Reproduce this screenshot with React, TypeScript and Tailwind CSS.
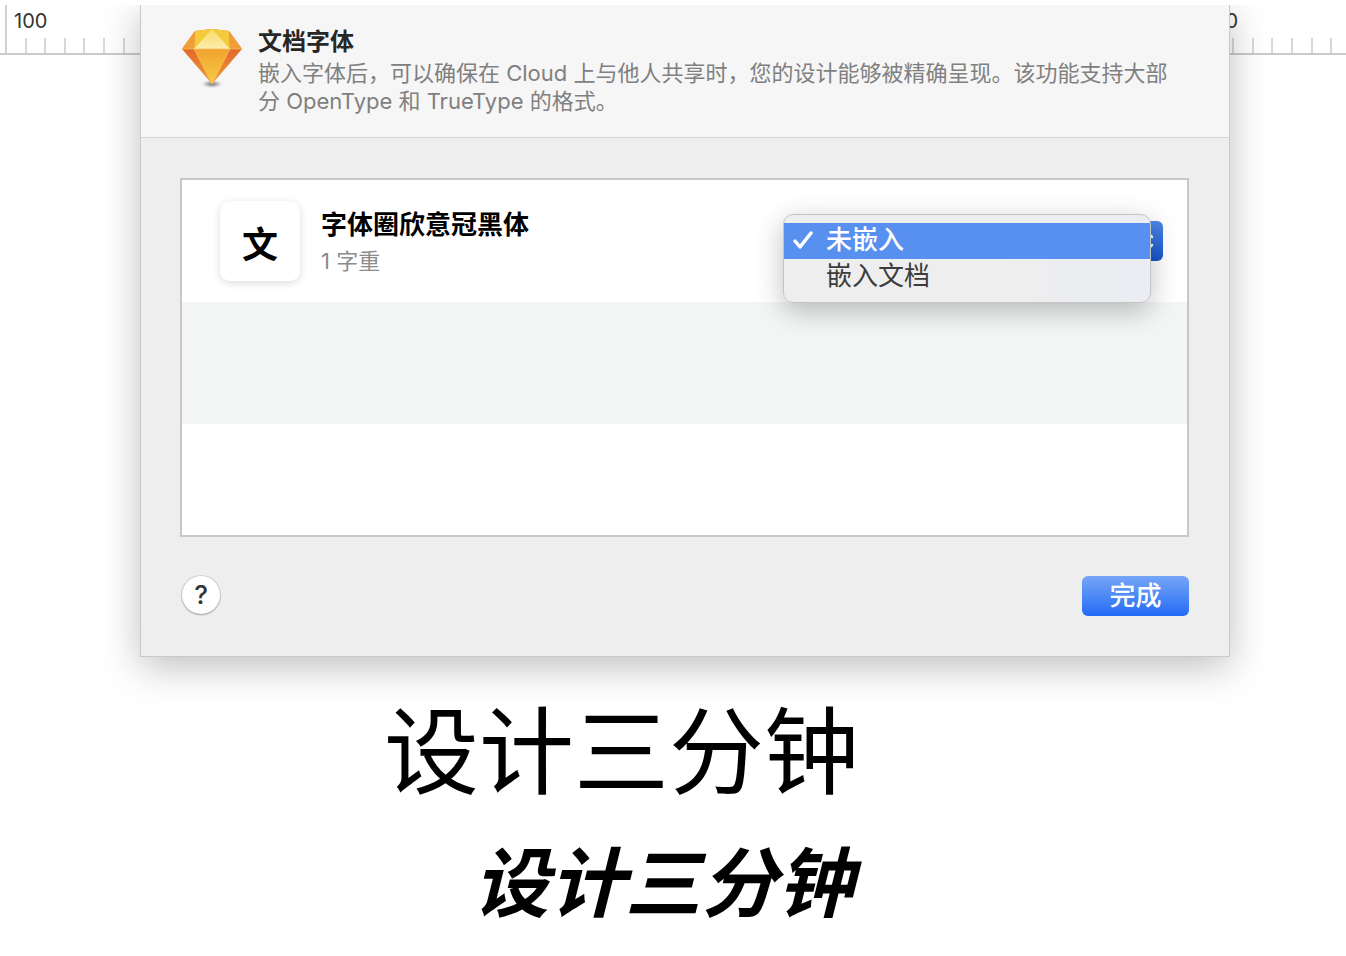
import { useState } from "react";
import { clsx } from "clsx";

const OPTIONS = ["未嵌入", "嵌入文档"];

// Labels of the marks that the sheet leaves uncovered
const RULER_MARKS = ["100", "", "", "", "", "", "700"];

function Ruler() {
  return (
    <div className="col-start-1 row-start-1 flex h-[50px] self-start overflow-hidden border-b-2 border-[#cbcbcb] pl-[5px]">
      {RULER_MARKS.map((mark, i) => (
        <div key={i} className="flex w-[198px] shrink-0 flex-col justify-between border-l-2 border-[#d2d2d2]">
          <span className="pl-[7px] pt-1 text-xl leading-6 text-[#333]">{mark}</span>
          <div className="grid grid-cols-10">
            {Array.from({ length: 10 }, (_, t) => (
              <i key={t} className={clsx("h-[15px]", t < 9 && "border-r-2 border-[#d8d8d8]")} />
            ))}
          </div>
        </div>
      ))}
    </div>
  );
}

function SketchIcon() {
  return (
    <svg viewBox="0 0 62 60" className="mt-6 h-[60px] w-[62px] shrink-0" aria-hidden="true">
      <defs>
        <linearGradient id="body" x1="0" y1="0" x2="0" y2="1">
          <stop offset="0" stopColor="#f0a22f" />
          <stop offset="1" stopColor="#f6cf45" />
        </linearGradient>
        <linearGradient id="side" gradientUnits="userSpaceOnUse" x1="0" y1="21" x2="0" y2="57">
          <stop offset="0" stopColor="#e2682b" />
          <stop offset="1" stopColor="#f0a43a" />
        </linearGradient>
        <linearGradient id="crown" x1="0" y1="0" x2="0" y2="1">
          <stop offset="0" stopColor="#f8db62" />
          <stop offset="1" stopColor="#fbedb0" />
        </linearGradient>
        <radialGradient id="ground">
          <stop offset="0" stopColor="#000" stopOpacity="0.5" />
          <stop offset="1" stopColor="#000" stopOpacity="0" />
        </radialGradient>
      </defs>
      <ellipse cx="31" cy="55" rx="10" ry="4" fill="url(#ground)" />
      <path d="M1 20 14 2 31 0l17 2 13 18-30 35z" fill="url(#side)" />
      <path d="M14 2 31 0l17 2 1 18H13z" fill="#f5cb3e" />
      <path d="M14 2 1 20h12zM48 2l13 18H49z" fill="#ef9f36" />
      <path d="M31 0 13 20h36z" fill="url(#crown)" />
      <path d="M13 20h36L31 55z" fill="url(#body)" />
      <path d="M1 20h60M13 20l18 35 18-35" fill="none" stroke="#f7bd55" strokeWidth="0.8" />
    </svg>
  );
}

function EmbedPicker() {
  const [value, setValue] = useState(OPTIONS[0]);

  return (
    <div className="relative h-10 w-[372px]">
      <select
        aria-label="嵌入方式"
        value={value}
        onChange={(e) => setValue(e.target.value)}
        className="h-10 w-full appearance-none rounded-md border border-[#d8d8d8] bg-white pl-8 text-[26px] leading-9"
      >
        {OPTIONS.map((o) => (
          <option key={o}>{o}</option>
        ))}
      </select>
      <span className="pointer-events-none absolute inset-y-0 right-0 flex w-8 items-center justify-center rounded-r-md bg-gradient-to-b from-[#4b88ea] to-[#1854cc]">
        <svg viewBox="0 0 14 22" className="h-[22px] w-3.5" fill="none" stroke="#fff" strokeWidth="2.5" strokeLinecap="round" strokeLinejoin="round">
          <path d="m2 7 5-5 5 5M2 15l5 5 5-5" />
        </svg>
      </span>

      {/* Opened menu */}
      <div
        role="menu"
        className="absolute -left-2 -top-[7px] right-3 rounded-[10px] border border-[#c4c4c4] bg-gradient-to-r from-[#eeeeee] from-60% to-[#ebedf3] pb-[7px] pt-2 shadow-[0_8px_28px_rgba(0,0,0,0.25)]"
      >
        {OPTIONS.map((o) => (
          <button
            key={o}
            role="menuitemradio"
            aria-checked={o === value}
            onClick={() => setValue(o)}
            className={clsx(
              "flex h-9 w-full items-center pb-0.5 pl-[9px] text-left text-[26px] leading-9",
              o === value ? "bg-[#5890f0] font-medium text-white" : "text-[#3c3c3c]"
            )}
          >
            <svg viewBox="0 0 20 20" className="mr-[13px] h-5 w-5" fill="none" stroke="currentColor" strokeWidth="3.5" strokeLinecap="round" strokeLinejoin="round">
              {o === value && <path d="m2 11 5 6L18 3" />}
            </svg>
            {o}
          </button>
        ))}
      </div>
    </div>
  );
}

function FontSheet() {
  return (
    <section className="z-10 col-start-1 row-start-1 ml-[140px] mr-[116px] border border-t-0 border-[#c9c9c9] bg-[#eeeeee] shadow-[0_10px_36px_rgba(0,0,0,0.25)]">
      <header className="flex h-[133px] gap-[15px] border-b border-[#d6d6d6] bg-[#f6f6f6] pl-10 pr-12">
        <SketchIcon />
        <div className="pt-[21px]">
          <h1 className="text-2xl font-bold leading-8 text-[#262626]">文档字体</h1>
          <p className="pt-px text-[22px] leading-7 text-[#808080]">
            嵌入字体后，可以确保在 Cloud 上与他人共享时，您的设计能够被精确呈现。该功能支持大部分 OpenType 和 TrueType 的格式。
          </p>
        </div>
      </header>

      <div className="py-10 pl-[39px] pr-10">
        <ul className="border-2 border-[#c8c8c8] bg-white">
          <li className="flex h-[122px] items-center pl-[38px] pr-6">
            <span className="flex h-20 w-20 items-center justify-center rounded-[10px] bg-white pt-2 text-4xl font-bold text-black shadow-[0_2px_8px_rgba(0,0,0,0.14)]">
              文
            </span>
            <div className="ml-[21px] flex-1 pt-1">
              <h2 className="text-[26px] font-bold leading-9 text-black">字体圈欣意冠黑体</h2>
              <p className="text-[22px] leading-9 text-[#8c8c8c]">1 字重</p>
            </div>
            <EmbedPicker />
          </li>
          <li className="h-[122px] bg-[#f3f6f5]" />
          <li className="h-[111px]" />
        </ul>

        <footer className="flex items-start justify-between pl-0.5 pt-[39px]">
          <button
            aria-label="帮助"
            className="flex h-[38px] w-[38px] items-center justify-center rounded-full bg-white text-[26px] font-medium leading-none text-[#333] shadow-[0_0_0_1px_rgba(0,0,0,0.1),0_1px_2px_rgba(0,0,0,0.25)]"
          >
            ?
          </button>
          <button className="h-10 w-[107px] rounded-md bg-gradient-to-b from-[#75a5f6] to-[#216af5] text-[26px] font-medium leading-10 text-white">
            完成
          </button>
        </footer>
      </div>
    </section>
  );
}

export default function App() {
  return (
    <div className="min-h-screen bg-white pt-[5px] font-['Inter','Noto_Sans_CJK_SC',sans-serif]">
      <main className="overflow-hidden">
        <div className="grid grid-cols-[minmax(0,1fr)]">
          <Ruler />
          <FontSheet />
        </div>
        <div className="ml-[384px] w-fit pb-4 pt-12 text-right leading-none text-black">
          <p className="text-[95px] leading-[96px]">设计三分钟</p>
          <p className="pr-1.5 pt-[30px] text-[76px] font-bold italic leading-[104px]">设计三分钟</p>
        </div>
      </main>
    </div>
  );
}
